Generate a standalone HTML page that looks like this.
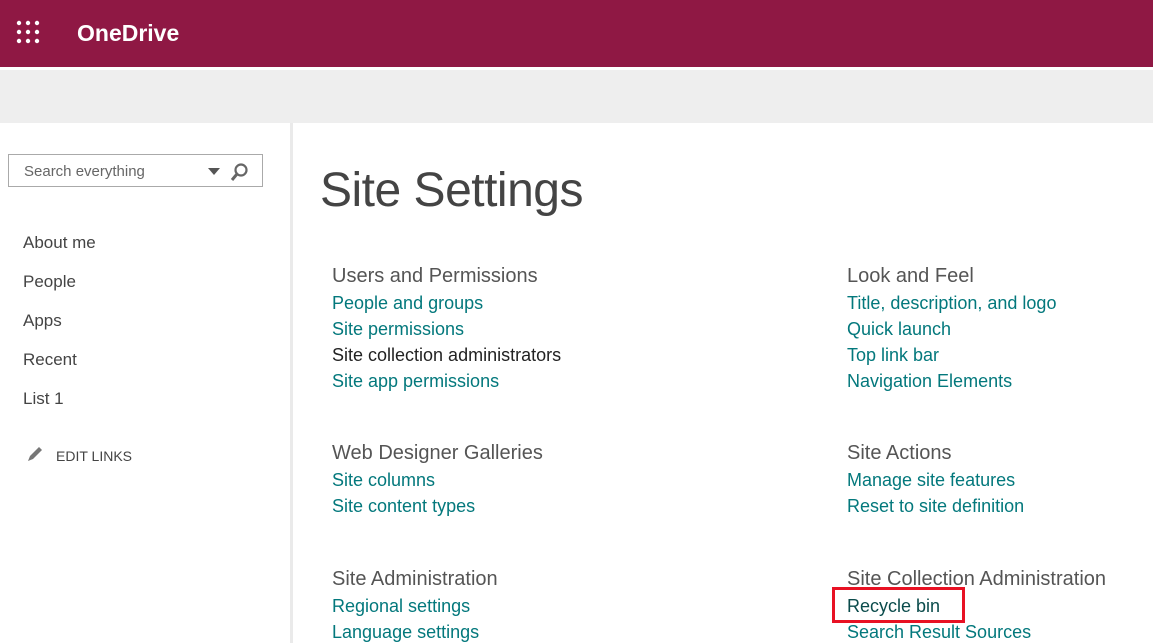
<!DOCTYPE html>
<html><head><style>
body{margin:0;width:1153px;height:643px;overflow:hidden;background:#fff;font-family:"Liberation Sans",sans-serif;position:relative}
.a{position:absolute;white-space:nowrap}
.hdr{left:0;top:0;width:1153px;height:67px;background:#8f1844}
.band{left:0;top:70px;width:1153px;height:53px;background:#eeeeee}
.nav{left:0;top:123px;width:290px;height:520px;background:#fff;border-right:3px solid #eaeaea}
.nl{left:23px;font-size:17px;color:#444}
.h{font-size:20px;color:#555;font-weight:300}
.l{font-size:18px;color:#03787c}
.d{font-size:18px;color:#222}
</style></head><body>
<div class="a hdr"></div>
<svg class="a" style="left:16px;top:20px" width="26" height="26">
<g fill="#fff"><circle cx="3" cy="3" r="2.2"/><circle cx="12" cy="3" r="2.2"/><circle cx="21" cy="3" r="2.2"/><circle cx="3" cy="12" r="2.2"/><circle cx="12" cy="12" r="2.2"/><circle cx="21" cy="12" r="2.2"/><circle cx="3" cy="21" r="2.2"/><circle cx="12" cy="21" r="2.2"/><circle cx="21" cy="21" r="2.2"/></g></svg>
<div class="a" style="left:77px;top:20px;font-size:23px;color:#fff;font-weight:bold">OneDrive</div>
<div class="a band"></div>
<div class="a nav"></div>
<div class="a" style="left:8px;top:154px;width:253px;height:31px;border:1px solid #aaa;background:#fff"></div>
<div class="a" style="left:24px;top:163px;font-size:15px;color:#666">Search everything</div>
<svg class="a" style="left:207px;top:162px" width="58" height="22"><path d="M1 6h12l-6 7z" fill="#555"/><circle cx="34" cy="8" r="5.5" fill="none" stroke="#666" stroke-width="2.2"/><path d="M30 12l-5 6" stroke="#666" stroke-width="3"/></svg>
<div class="a nl" style="top:233px">About me</div>
<div class="a nl" style="top:272px">People</div>
<div class="a nl" style="top:311px">Apps</div>
<div class="a nl" style="top:350px">Recent</div>
<div class="a nl" style="top:389px">List 1</div>
<svg class="a" style="left:26px;top:445px" width="20" height="18"><path d="M2 16l2-5 9-9 3 3-9 9z" fill="#777"/></svg>
<div class="a" style="left:56px;top:448px;font-size:14px;color:#444">EDIT LINKS</div>
<div class="a" style="left:320px;top:163px;font-size:48px;color:#444;font-weight:300;letter-spacing:-0.5px">Site Settings</div>

<div class="a h" style="left:332px;top:265px">Users and Permissions</div>
<div class="a l" style="left:332px;top:293px">People and groups</div>
<div class="a l" style="left:332px;top:319px">Site permissions</div>
<div class="a d" style="left:332px;top:345px">Site collection administrators</div>
<div class="a l" style="left:332px;top:371px">Site app permissions</div>
<div class="a h" style="left:332px;top:442px">Web Designer Galleries</div>
<div class="a l" style="left:332px;top:470px">Site columns</div>
<div class="a l" style="left:332px;top:496px">Site content types</div>
<div class="a h" style="left:332px;top:568px">Site Administration</div>
<div class="a l" style="left:332px;top:596px">Regional settings</div>
<div class="a l" style="left:332px;top:622px">Language settings</div>

<div class="a h" style="left:847px;top:265px">Look and Feel</div>
<div class="a l" style="left:847px;top:293px">Title, description, and logo</div>
<div class="a l" style="left:847px;top:319px">Quick launch</div>
<div class="a l" style="left:847px;top:345px">Top link bar</div>
<div class="a l" style="left:847px;top:371px">Navigation Elements</div>
<div class="a h" style="left:847px;top:442px">Site Actions</div>
<div class="a l" style="left:847px;top:470px">Manage site features</div>
<div class="a l" style="left:847px;top:496px">Reset to site definition</div>
<div class="a h" style="left:847px;top:568px">Site Collection Administration</div>
<div class="a d" style="left:847px;top:596px;color:#0a4b4b">Recycle bin</div>
<div class="a" style="left:832px;top:587px;width:127px;height:30px;border:3px solid #e81123"></div>
<div class="a l" style="left:847px;top:622px">Search Result Sources</div>
</body></html>
